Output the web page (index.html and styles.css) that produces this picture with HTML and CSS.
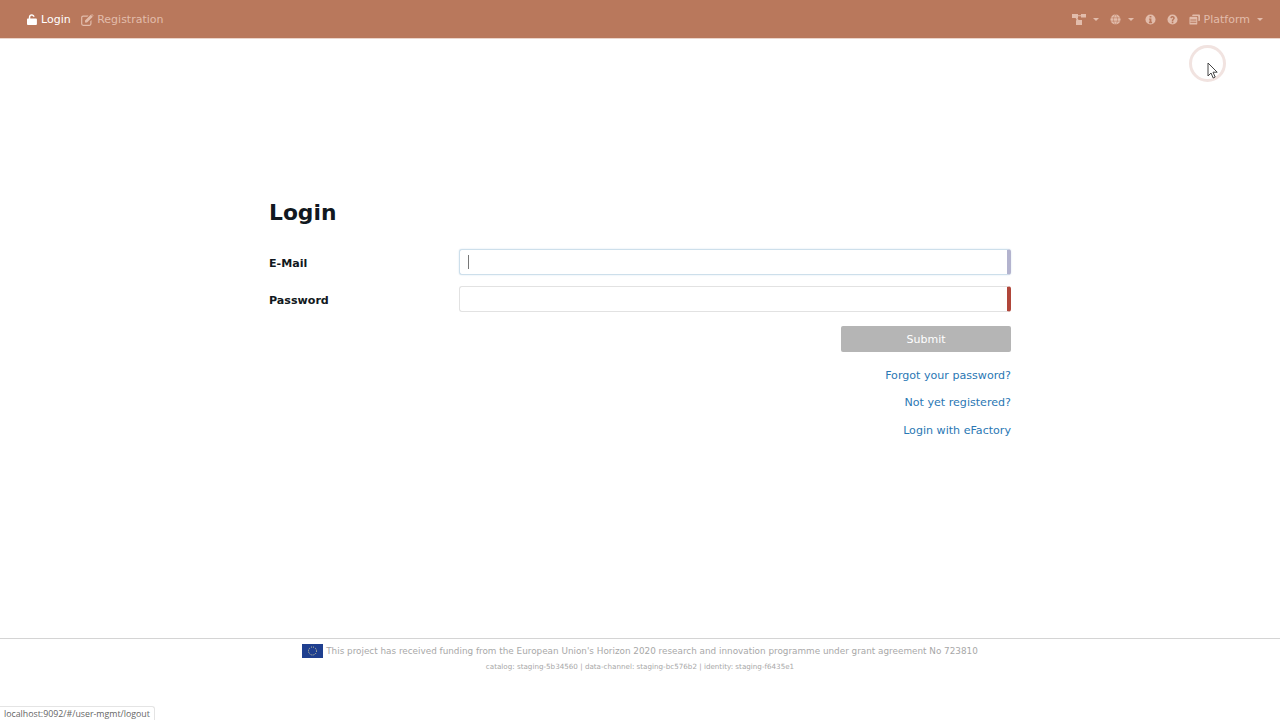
FILE: index.html
```html
<!DOCTYPE html>
<html>

<head>
    <title>Login</title>
    <meta charset="UTF-8">
    <link rel="stylesheet" href="styles.css">
</head>

<body>
    <nav class="navbar">
        <div class="nav-group left">
            <a class="nav-link active">
                <svg class="icon lock" viewBox="0 0 11 12"><path d="M2 5V3.400C2 1.500 3.400.3 5.200.3 6.900.3 8.200 1.400 8.400 3H6.800C6.600 2.300 6 1.800 5.200 1.800 4.200 1.800 3.600 2.500 3.600 3.400V5H9.900a1 1 0 0 1 1 1v5a1 1 0 0 1-1 1H1a1 1 0 0 1-1-1V6a1 1 0 0 1 1-1z"/></svg>
                Login
            </a>
            <a class="nav-link register">
                <svg class="icon edit" viewBox="0 0 13 12"><path d="M2.200 1.500H7.500L6.400 2.700H2.200a.9.9 0 0 0-.9.900v6.200a.9.9 0 0 0 .9.900h6.200a.9.9 0 0 0 .9-.900V7.200l1.200-1.200v3.800a2.100 2.100 0 0 1-2.100 2.100H2.200A2.100 2.100 0 0 1 .1 9.800V3.600a2.100 2.100 0 0 1 2.100-2.100z"/><path d="M4 6.500 9.800.7l2 2L6 8.500H4zM10.300.2l.6-.2 1.600 1.600-.2.600z"/></svg>
                Registration
            </a>
        </div>
        <div class="nav-group right">
            <a class="nav-link caret">
                <svg class="icon graph" viewBox="0 0 14 11"><path d="M0 0h6v1.200h3V0h5v3.400H9V2.200H6v1.900h-.6L6.600 6H10v5H4V6.400L4.700 6 3.600 4.100H0z"/></svg>
            </a>
            <a class="nav-link caret">
                <svg class="icon" viewBox="0 0 12 12"><circle cx="6" cy="6" r="5.500"/><path d="M.5 4.200h11M.5 7.800h11M6 .5c-3 3-3 8 0 11M6 .5c3 3 3 8 0 11" class="cut"/></svg>
            </a>
            <a class="nav-link">
                <svg class="icon" viewBox="0 0 12 12"><circle cx="6" cy="6" r="5.500"/><path d="M5 2.300h2v1.500H5zM4.500 5h2.500v3.500h.7V10H4.300V8.500H5V6.300h-.5z" class="cut-fill"/></svg>
            </a>
            <a class="nav-link">
                <svg class="icon" viewBox="0 0 12 12"><circle cx="6" cy="6" r="5.500"/><path d="M5.200 8.300h1.700V10H5.200zM3.600 4.300C3.800 3 4.800 2.300 6 2.300c1.400 0 2.500.9 2.500 2.100 0 1.900-1.700 1.700-1.700 3.200H5.200c0-2.300 1.600-2.200 1.600-3.100 0-.4-.4-.7-.8-.7-.5 0-.8.300-.9.800z" class="cut-fill"/></svg>
            </a>
            <a class="nav-link caret platform">
                <svg class="icon" viewBox="0 0 12 12"><path d="M3.500 1.500a1 1 0 0 1 1-1H11a1 1 0 0 1 1 1v5a1 1 0 0 1-1 1h-.8V3.500a1.200 1.200 0 0 0-1.200-1.200H3.500z"/><path d="M.5 4a1 1 0 0 1 1-1H8a1 1 0 0 1 1 1v6.500a1 1 0 0 1-1 1H1.500a1 1 0 0 1-1-1zM1.500 6v1h6.500V6zM1.500 8.500v1h6.500v-1z" fill-rule="evenodd"/></svg>
                Platform
            </a>
        </div>
    </nav>

    <main class="content">
        <h2>Login</h2>
        <div class="form-row">
            <label for="email">E-Mail</label>
            <div class="field focused">
                <input type="text" id="email">
                <span class="caret-line"></span>
            </div>
        </div>
        <div class="form-row">
            <label for="password">Password</label>
            <div class="field invalid">
                <input type="password" id="password">
            </div>
        </div>
        <div class="actions">
            <button type="button">Submit</button>
        </div>
        <div class="links">
            <a href="#">Forgot your password?</a>
            <a href="#">Not yet registered?</a>
            <a href="#">Login with eFactory</a>
        </div>
    </main>

    <footer class="footer">
        <p class="funding">
            <svg class="flag" viewBox="0 0 21 14">
                <rect width="21" height="14" fill="#1f3f8f"/>
                <circle cx="10.500" cy="7" r="4" fill="none" stroke="#d8d2a0" stroke-width="1" stroke-dasharray="1 1.100"/>
            </svg>
            This project has received funding from the European Union's Horizon 2020 research and innovation programme under grant agreement No 723810
        </p>
        <p class="versions">catalog: staging-5b34560 | data-channel: staging-bc576b2 | identity: staging-f6435e1</p>
    </footer>

    <div class="status-url">localhost:9092/#/user-mgmt/logout</div>

    <div class="click-ring"></div>
    <svg class="pointer" viewBox="0 0 11 17"><path d="M1 1v13l3-3 2.200 5 2-1-2.200-4.800h4.200z"/></svg>
</body>

</html>
```

FILE: styles.css
```css
* {
    box-sizing: border-box;
}

html,
body {
    height: 100%;
}

body {
    display: flex;
    flex-direction: column;
    height: 720px;
    margin: 0;
    overflow: hidden;
    font-family: "DejaVu Sans", Verdana, sans-serif;
    font-size: 11.1px;
    color: #111820;
    background-color: #fff;
}

.navbar {
    display: flex;
    justify-content: space-between;
    align-items: center;
    height: 39px;
    padding: 1px 17px 0 27px;
    border-bottom: 1px solid #ecd5cb;
    background-color: #b9785c;
}

.nav-group {
    display: flex;
    align-items: center;
    gap: 11px;
}

.nav-group.left {
    gap: 10px;
}

.nav-link {
    display: flex;
    align-items: center;
    gap: 4px;
    color: #e2bcab;
    font-size: 11px;
}

.nav-link.active {
    color: #fff;
}

.nav-link.register {
    gap: 3.5px;
}

.icon {
    width: 11px;
    height: 11px;
    fill: currentColor;
}

.icon.lock {
    width: 10px;
    height: 11px;
}

.icon.edit {
    width: 13px;
    height: 12px;
}

.icon.graph {
    width: 14px;
    height: 11px;
}

.icon .cut {
    fill: none;
    stroke: #b9785c;
    stroke-width: 0.6;
}

.icon .cut-fill {
    fill: #b9785c;
}

.caret::after {
    content: "";
    margin-left: 3px;
    border-top: 3px solid currentColor;
    border-left: 3px solid transparent;
    border-right: 3px solid transparent;
}

.platform::after {
    margin-left: 3px;
}

.content {
    width: 742px;
    margin: 0 auto;
    padding-top: 160px;
    flex: 1;
}

h2 {
    margin: 0 0 22px;
    font-size: 21.8px;
    line-height: 28px;
    font-weight: bold;
}

.form-row {
    display: flex;
    align-items: center;
    height: 27px;
    margin-bottom: 10px;
}

.form-row label {
    width: 190px;
    padding-top: 1px;
    font-weight: bold;
    font-size: 11.1px;
}

.field {
    position: relative;
    flex: 1;
    align-self: flex-start;
    height: 26px;
}

.field input {
    width: 100%;
    height: 100%;
    padding: 0 8px;
    border: 1px solid #e2e2e2;
    border-right: 4px solid #b0463a;
    border-radius: 3px;
    outline: none;
    background-color: #fff;
}

.field.focused input {
    border-color: #cddfeb;
    border-right-color: #b3b3ce;
    box-shadow: 0 0 2px #d6e4ee;
}

.caret-line {
    position: absolute;
    left: 9px;
    top: 6px;
    width: 1px;
    height: 14px;
    background-color: #777;
}

.actions {
    display: flex;
    justify-content: flex-end;
    margin-top: 13px;
}

.actions button {
    width: 170px;
    height: 26px;
    padding: 1px 0 0;
    border: none;
    border-radius: 2px;
    background-color: #b5b5b5;
    color: #fff;
    font-family: "DejaVu Sans", Verdana, sans-serif;
    font-size: 11px;
}

.links {
    display: flex;
    flex-direction: column;
    align-items: flex-end;
    gap: 13.4px;
    margin-top: 17px;
}

.links a {
    line-height: 14px;
    color: #2a77b4;
    text-decoration: none;
}

.footer {
    height: 82px;
    padding-top: 4px;
    border-top: 1px solid #d4d4d4;
    text-align: center;
    color: #a8a8a8;
}

.footer p {
    margin: 0;
}

.funding {
    display: flex;
    justify-content: center;
    align-items: center;
    gap: 3px;
    height: 15px;
    font-size: 8.83px;
}

.flag {
    width: 21px;
    height: 14px;
}

.versions {
    margin-top: 3px !important;
    font-size: 7.16px;
    line-height: 11px;
}

.status-url {
    position: absolute;
    left: 0;
    bottom: 0;
    height: 14px;
    padding: 0 4px;
    border: 1px solid #e4e4e4;
    border-left: none;
    border-bottom: none;
    border-top-right-radius: 3px;
    background-color: #fff;
    color: #666;
    font-family: "Open Sans", Arial, sans-serif;
    font-size: 8.8px;
    line-height: 14px;
}

.click-ring {
    position: absolute;
    left: 1189px;
    top: 44.5px;
    width: 37px;
    height: 37px;
    border: 3px solid #f1e3e0;
    border-radius: 50%;
}

.pointer {
    position: absolute;
    left: 1207px;
    top: 62px;
    width: 11px;
    height: 17px;
    fill: #fff;
    stroke: #444;
    stroke-width: 1;
}
```
